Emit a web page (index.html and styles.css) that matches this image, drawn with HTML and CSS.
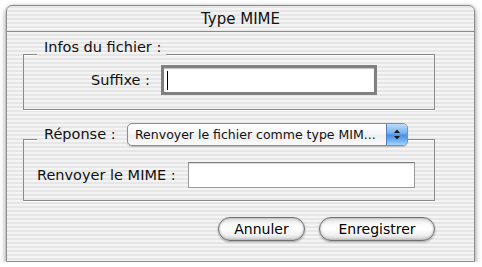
FILE: index.html
```html
<!DOCTYPE html>
<html lang="fr">
<head>
<meta charset="utf-8">
<title>Type MIME</title>
<link rel="stylesheet" href="styles.css">
</head>
<body>
<div class="window">
  <div class="titlebar">Type MIME</div>
  <div class="content">
    <div class="group g1">
      <div class="group-title"><span class="gt-label">Infos du fichier :</span></div>
      <div class="row">
        <span class="lbl lbl-suffix">Suffixe :</span>
        <div class="field field-focused"><span class="caret"></span></div>
      </div>
    </div>
    <div class="group g2">
      <div class="group-title">
        <span class="gt-label gt-reponse">Réponse :</span>
        <div class="popup">
          <span class="popup-text">Renvoyer le fichier comme type MIM...</span>
          <span class="popup-arrows">
            <svg width="8" height="13" viewBox="0 0 8 13"><path d="M4 1.5 L7 5 H1 Z M4 11.5 L7 8 H1 Z" fill="#1a1a1a"/></svg>
          </span>
        </div>
      </div>
      <div class="row">
        <span class="lbl">Renvoyer le MIME :</span>
        <div class="field field-mime"></div>
      </div>
    </div>
    <div class="buttons">
      <button class="btn btn-cancel">Annuler</button>
      <button class="btn btn-save">Enregistrer</button>
    </div>
  </div>
</div>
</body>
</html>
```
FILE: styles.css
```css
html, body {
  margin: 0;
  background: #ffffff;
}
body {
  font-family: "DejaVu Sans", sans-serif;
  font-size: 14.5px;
  color: #111;
  padding-top: 5px;
  padding-left: 6px;
}
.window,
.group-title {
  background: repeating-linear-gradient(to bottom, #f4f4f4 0 2px, #e6e6e6 2px 4px);
  background-attachment: fixed;
}
.window {
  box-sizing: border-box;
  width: 469px;
  height: 257px;
  border: 1px solid #8c8c8c;
  border-radius: 6px 6px 0 0;
  box-shadow: 0 3px 6px rgba(0,0,0,0.4), 0 0 3px rgba(0,0,0,0.15);
  display: flex;
  flex-direction: column;
}
.titlebar {
  height: 25px;
  line-height: 26px;
  text-align: center;
  border-bottom: 1px solid #8a8a8a;
  font-size: 15px;
}
.content {
  padding: 0 39px 0 16px;
  display: flex;
  flex-direction: column;
}
.group {
  position: relative;
  box-sizing: border-box;
  border: 1px solid #8a8a8a;
  box-shadow: 0 1px 0 rgba(255,255,255,0.8), inset 0 1px 0 rgba(255,255,255,0.8);
}
.g1 {
  margin-top: 22px;
  height: 56px;
  padding-top: 10px;
}
.g2 {
  margin-top: 29px;
  height: 62px;
  padding: 22px 19px 0 13px;
}
.group-title {
  position: absolute;
  left: 13px;
  display: flex;
  align-items: center;
  padding: 0 5px 0 7px;
  line-height: 17px;
}
.g1 .group-title { top: -16px; }
.g2 .group-title { top: -17px; padding-right: 0; }
.gt-reponse { width: 83px; }
.row {
  display: flex;
  align-items: center;
}
.lbl {
  line-height: 17px;
}
.lbl-suffix {
  width: 126px;
  text-align: right;
  margin-right: 11px;
}
.field {
  box-sizing: border-box;
  background: #fff;
}
.field-focused {
  width: 216px;
  height: 30px;
  border: 3px solid #808080;
  box-shadow: inset 0 1px 1px rgba(0,0,0,0.25);
  display: flex;
  align-items: center;
  padding-left: 3px;
}
.caret {
  width: 1px;
  height: 19px;
  background: #000;
}
.field-mime {
  margin-left: auto;
  width: 227px;
  height: 26px;
  border: 1px solid #9a9a9a;
  border-top-color: #7e7e7e;
  box-shadow: inset 0 1px 1px rgba(0,0,0,0.15);
}
.popup {
  box-sizing: border-box;
  width: 281px;
  height: 23px;
  border: 1px solid #8d8d8d;
  border-radius: 5px;
  background: linear-gradient(to bottom, #ffffff 0%, #f7f7f7 45%, #eeeeee 55%, #fbfbfb 100%);
  box-shadow: 0 1px 1px rgba(0,0,0,0.2);
  display: flex;
  align-items: center;
  overflow: hidden;
}
.popup-text {
  flex: 1;
  padding-left: 7px;
  font-size: 12.5px;
  white-space: nowrap;
}
.popup-arrows {
  width: 20px;
  align-self: stretch;
  display: flex;
  align-items: center;
  justify-content: center;
  border-left: 1px solid #4d7fc4;
  background: linear-gradient(to bottom, #bcdcfb 0%, #7fb4ef 40%, #4a8fe3 55%, #7cbaf6 85%, #a9d6fc 100%);
}
.buttons {
  display: flex;
  justify-content: flex-end;
  gap: 14px;
  margin-top: 16px;
}
.btn {
  box-sizing: border-box;
  height: 24px;
  padding: 0;
  font-family: "DejaVu Sans", sans-serif;
  font-size: 14px;
  color: #000;
  border: 1px solid #707070;
  border-radius: 12px;
  background: linear-gradient(to bottom, #e2e2e2 0%, #fbfbfb 30%, #ffffff 50%, #f2f2f2 75%, #d6d6d6 100%);
  box-shadow: inset 0 0 3px rgba(0,0,0,0.35), 0 1px 2px rgba(0,0,0,0.35);
}
.btn-cancel { width: 87px; }
.btn-save { width: 116px; }
```
